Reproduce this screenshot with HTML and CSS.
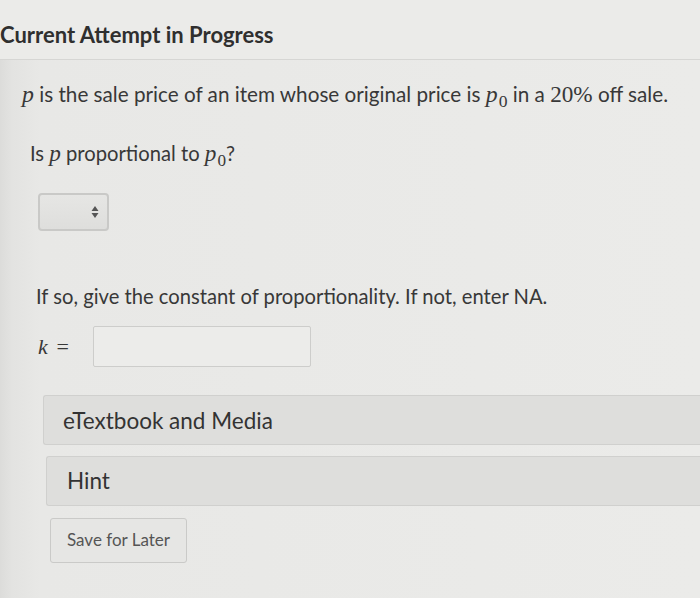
FILE: index.html
```html
<!DOCTYPE html>
<html>
<head>
<meta charset="utf-8">
<link rel="stylesheet" href="styles.css">
</head>
<body>
<div class="page">
  <header class="header">
    <h1 class="title">Current Attempt in Progress</h1>
  </header>
  <main class="content">
    <p class="question"><span class="m">p</span> is the sale price of an item whose original price is <span class="m">p</span><sub class="sub">0</sub> in a <span class="num">20%</span> off sale.</p>
    <div class="part">
      <p class="ask">Is <span class="m">p</span> proportional to <span class="m">p</span><sub class="sub">0</sub>?</p>
      <div class="select">
        <svg class="arrows" width="8" height="14" viewBox="0 0 8 14"><path d="M4 1 L7.5 6 L0.5 6 Z M4 13 L7.5 8 L0.5 8 Z" fill="#555"/></svg>
      </div>
      <p class="ask2">If so, give the constant of proportionality. If not, enter NA.</p>
      <div class="kline">
        <span class="k"><span class="m">k</span> <span class="eq">=</span></span>
        <div class="input"></div>
      </div>
    </div>
    <div class="bar bar1">eTextbook and Media</div>
    <div class="bar bar2">Hint</div>
    <button class="save">Save for Later</button>
  </main>
</div>
</body>
</html>
```
FILE: styles.css
```css
html, body {
  margin: 0;
  padding: 0;
}
body {
  background: #e7e7e5;
  font-family: Lato, "Open Sans", sans-serif;
  color: #383838;
  width: 700px;
  height: 598px;
  overflow: hidden;
}
.page {
  height: 598px;
  background: linear-gradient(90deg, #dcdcda 0, #e3e3e1 12px, #e8e8e6 40px, #ebebe9 100%);
}
.header {
  height: 60px;
  border-bottom: 1px solid #d6d6d4;
  box-sizing: border-box;
  background: #ebebe9;
}
.title {
  margin: 0;
  padding-top: 21px;
  font-size: 22px;
  font-weight: 700;
  color: #2f2f2f;
}
.content {
  padding-left: 22px;
}
.question {
  margin: 0;
  padding-top: 19px;
  font-size: 20.7px;
  line-height: 30px;
}
.m {
  font-family: "Liberation Serif", "DejaVu Serif", serif;
  font-style: italic;
  font-size: 1.15em;
}
.num {
  font-family: "Liberation Serif", "DejaVu Serif", serif;
  font-size: 1.12em;
}
.sub {
  font-family: "Liberation Serif", serif;
  font-size: 0.85em;
  vertical-align: -5px;
  line-height: 0;
  margin-left: 1px;
}
.part {
  padding-left: 8px;
}
.ask {
  margin: 0;
  padding-top: 29px;
  font-size: 20.2px;
  line-height: 30px;
}
.select {
  margin-top: 25px;
  margin-left: 8px;
  width: 71px;
  height: 38px;
  box-sizing: border-box;
  border: 2px solid #c9c9c7;
  border-radius: 4px;
  background: linear-gradient(#e6e6e4, #dededc);
  display: flex;
  align-items: center;
  justify-content: flex-end;
  padding-right: 8px;
}
.ask2 {
  margin: 0;
  padding-top: 50px;
  padding-left: 6px;
  font-size: 20.2px;
  line-height: 30px;
}
.kline {
  display: flex;
  align-items: center;
  margin-top: 15px;
  padding-left: 8px;
}
.k {
  width: 55px;
  font-size: 19px;
}
.k .m {
  font-size: 1.15em;
}
.eq {
  font-family: "Liberation Serif", serif;
  font-size: 22px;
  margin-left: 4px;
}
.input {
  width: 218px;
  height: 41px;
  box-sizing: border-box;
  border: 1.5px solid #cdcdcb;
  background: #ececea;
  border-radius: 2px;
}
.bar {
  height: 50px;
  box-sizing: border-box;
  background: #dededc;
  border: 1px solid #d0d0ce;
  border-right: none;
  border-radius: 3px 0 0 3px;
  display: flex;
  align-items: center;
  font-size: 22.5px;
  color: #333;
}
.bar1 {
  margin-top: 28px;
  margin-left: 21px;
  padding-left: 19px;
  padding-bottom: 0;
}
.bar2 {
  margin-top: 11px;
  margin-left: 24px;
  padding-left: 20px;
  padding-bottom: 2px;
}
.save {
  display: block;
  margin-top: 12px;
  margin-left: 28px;
  width: 137px;
  height: 45px;
  background: #e6e6e4;
  border: 1px solid #cacac8;
  border-radius: 3px;
  font-family: Lato, sans-serif;
  font-size: 17px;
  color: #555;
  padding: 0 0 3px 0;
}
```
